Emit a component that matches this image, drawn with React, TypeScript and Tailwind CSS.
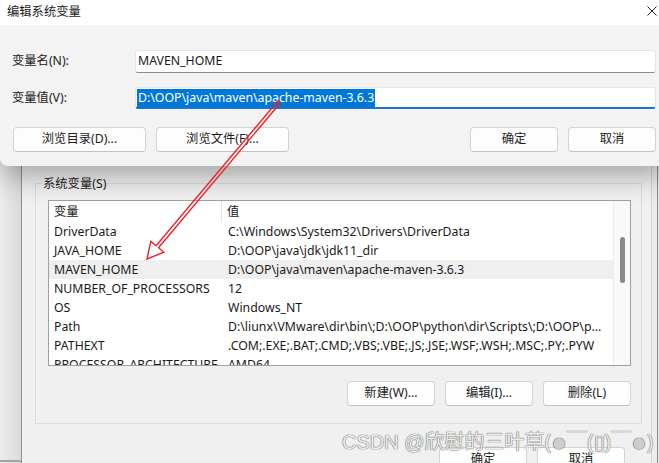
import React from "react";

const rows: [string, string][] = [
  ["DriverData", "C:\\Windows\\System32\\Drivers\\DriverData"],
  ["JAVA_HOME", "D:\\OOP\\java\\jdk\\jdk11_dir"],
  ["MAVEN_HOME", "D:\\OOP\\java\\maven\\apache-maven-3.6.3"],
  ["NUMBER_OF_PROCESSORS", "12"],
  ["OS", "Windows_NT"],
  ["Path", "D:\\liunx\\VMware\\dir\\bin\\;D:\\OOP\\python\\dir\\Scripts\\;D:\\OOP\\p..."],
  ["PATHEXT", ".COM;.EXE;.BAT;.CMD;.VBS;.VBE;.JS;.JSE;.WSF;.WSH;.MSC;.PY;.PYW"],
  ["PROCESSOR_ARCHITECTURE", "AMD64"],
];

function Btn({ children, className = "" }: { children: React.ReactNode; className?: string }) {
  return (
    <div
      className={`flex items-center justify-center h-[25px] rounded-[4px] border border-[#d3d3d3] border-b-[#c2c2c2] bg-[#fdfdfd] text-[12.3px] text-[#1b1b1b] ${className}`}
    >
      {children}
    </div>
  );
}

export default function App() {
  return (
    <div className="relative w-[659px] h-[463px] overflow-hidden flex bg-[#e6e6e6] font-['Noto_Sans','Noto_Sans_CJK_SC',sans-serif] text-[#1a1a1a] leading-none">
      {/* left desktop strip */}
      <div className="w-[21px] h-full bg-linear-to-r from-[#ededed] to-[#d9d9d9] flex flex-col justify-end">
        <div className="h-[2px] bg-[#a3a3a3] mb-[1px]" />
      </div>

      {/* background window: 环境变量 */}
      <div className="w-[631px] h-full border-l border-l-[#8f8f8f] border-r border-r-[#d2d2d2] bg-[#f0f0f0] pt-[183px]">
        <div className="relative ml-[13px] w-[607px] h-[241px] border border-[#dcdcdc] pl-[12px] pr-[10px] pt-[16px]">
          <div className="absolute left-[6px] -top-[8px] px-[1px] bg-[#f0f0f0] text-[12.3px] leading-[15px]">系统变量(S)</div>

          <div className="w-[583px] h-[166px] border border-[#a0a0a0] bg-white flex overflow-hidden">
            <div className="w-[564px] flex flex-col">
              <div className="flex h-[21px] shrink-0 items-center text-[12.3px] leading-[21px]">
                <div className="w-[173px] h-full pl-[5px] border-r border-[#e5e5e5]">变量</div>
                <div className="flex-1 pl-[5px]">值</div>
              </div>
              {rows.map(([k, v]) => (
                <div
                  key={k}
                  className={`flex h-[19px] shrink-0 text-[12.3px] leading-[19px] whitespace-nowrap ${k === "MAVEN_HOME" ? "bg-[#efefef]" : ""}`}
                >
                  <div className="w-[174px] pl-[5px] overflow-x-hidden">{k}</div>
                  <div className="flex-1 pl-[5px] overflow-x-hidden">{v}</div>
                </div>
              ))}
            </div>
            <div className="flex-1 bg-[#f9f9f9] border-l border-[#ececec] flex flex-col items-center pt-[36px]">
              <div className="w-[5px] h-[46px] rounded-[3px] bg-[#8a8a8a]" />
            </div>
          </div>

          <div className="flex justify-end gap-[10px] mt-[15px]">
            <Btn className="w-[88px]">新建(W)...</Btn>
            <Btn className="w-[88px]">编辑(I)...</Btn>
            <Btn className="w-[88px]">删除(L)</Btn>
          </div>
        </div>

        <div className="flex justify-end gap-[10px] pr-[26px] mt-[23px]">
          <Btn className="w-[88px]">确定</Btn>
          <Btn className="w-[88px]">取消</Btn>
        </div>
      </div>

      {/* right desktop strip */}
      <div className="flex-1 h-full flex bg-[#ececec]">
        <div className="w-[5px]" />
        <div className="w-[1px] h-full bg-[#8a8a8a]" />
      </div>

      {/* front dialog: 编辑系统变量 */}
      <div className="absolute left-0 top-0 w-[668px] rounded-b-[8px] bg-[#f3f3f3] shadow-[0_10px_28px_rgba(0,0,0,0.32)] overflow-hidden">
        <div className="h-[25px] bg-white flex items-center justify-between pl-[7px] pr-[11px]">
          <span className="text-[12.3px]">编辑系统变量</span>
          <svg width="10" height="10" viewBox="0 0 10 10" className="mt-[-3px]">
            <path d="M0.5 0.5 L9.5 9.5 M9.5 0.5 L0.5 9.5" stroke="#1a1a1a" strokeWidth="1" />
          </svg>
        </div>
        <div className="pl-[12px] pr-[12px] pt-[25px] pb-[14px]">
          <div className="flex items-center h-[23px]">
            <div className="w-[123px] text-[12.3px]">变量名(N):</div>
            <div className="flex-1 h-[23px] bg-white border border-[#e6e6e6] border-b-[#8c8c8c] rounded-[3px] flex items-center pl-[2px] text-[12.3px]">
              MAVEN_HOME
            </div>
          </div>
          <div className="flex items-center h-[22px] mt-[14px]">
            <div className="w-[123px] text-[12.3px]">变量值(V):</div>
            <div className="flex-1 h-[22px] bg-white border border-[#e6e6e6] border-b-2 border-b-[#1a73cf] rounded-[3px] flex items-center pl-[1px] text-[12.3px]">
              <span className="bg-[#0078d7] text-white leading-[18px] px-[1px]">D:\OOP\java\maven\apache-maven-3.6.3</span>
            </div>
          </div>
          <div className="flex items-center justify-between mt-[18px]">
            <div className="flex gap-[10px] pl-[1px]">
              <Btn className="w-[133px]">浏览目录(D)...</Btn>
              <Btn className="w-[133px]">浏览文件(F)...</Btn>
            </div>
            <div className="flex gap-[10px]">
              <Btn className="w-[88px] border-[#3d8ee0] border-b-[#3d8ee0]">确定</Btn>
              <Btn className="w-[88px]">取消</Btn>
            </div>
          </div>
        </div>
      </div>

      {/* watermark */}
      <div className="absolute left-[342px] top-[429px] flex items-center text-[20px] leading-[26px] whitespace-nowrap text-[#eeeeee] font-['Liberation_Sans','Noto_Sans_CJK_SC',sans-serif] [text-shadow:0_0_1px_#5a5a5a,0_0_1px_#5a5a5a]">
        <span>CSDN @欣慰的三叶草(</span>
        <span className="text-[26px] text-[#cdcdcd]">●</span>
        <span>￣(▯)￣</span>
        <span className="text-[26px] text-[#cdcdcd]">●</span>
        <span>)</span>
      </div>

      {/* red arrow */}
      <svg className="absolute inset-0 pointer-events-none" width="659" height="463" viewBox="0 0 659 463">
        <polygon
          points="277.8,101 156.1,245.7 150.8,241.2 147,259 163.8,252.2 158.5,247.7 280.2,103"
          fill="none"
          stroke="#e8242a"
          strokeWidth="1.4"
          strokeLinejoin="miter"
        />
      </svg>
    </div>
  );
}
